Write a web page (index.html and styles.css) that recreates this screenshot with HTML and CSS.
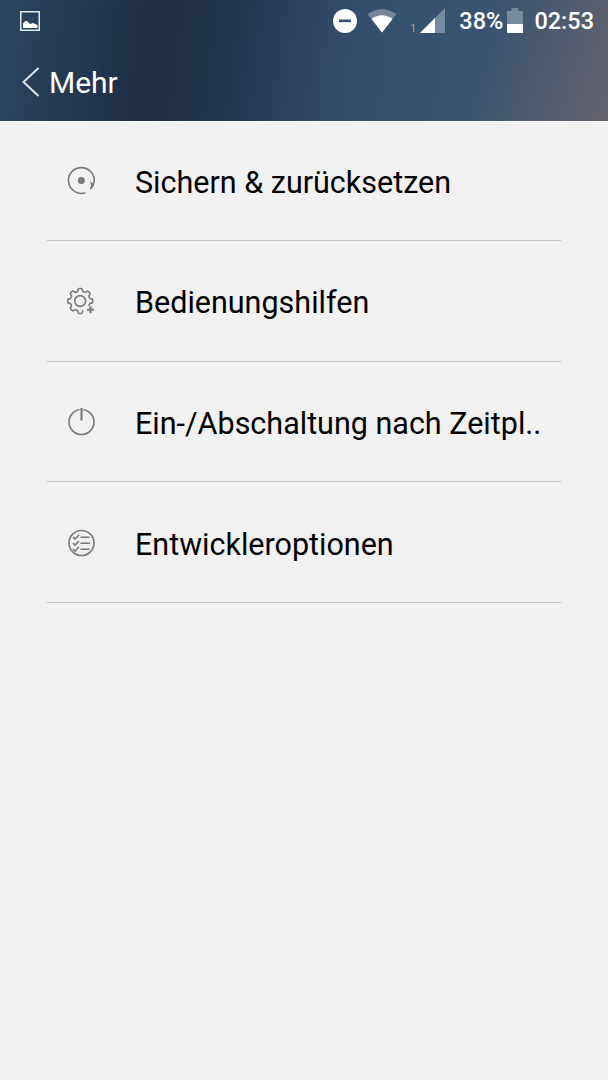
FILE: index.html
```html
<!DOCTYPE html>
<html lang="de">
<head>
  <meta charset="UTF-8">
  <meta name="viewport" content="width=device-width, initial-scale=1.0">
  <title>Mehr</title>
  <link rel="stylesheet" href="styles.css">
</head>
<body>
  <header class="header">
    <div class="status-bar">
      <svg class="picture" width="20" height="20" viewBox="0 0 20 20">
        <rect x=".75" y=".75" width="18.5" height="18.5" fill="none" stroke="#e4e8ec" stroke-width="1.5"/>
        <path d="M3 17v-4.500l2.500-2.500h1.500l3 3 3-1 4.500 2v3z" fill="#fff"/>
      </svg>
      <svg class="dnd" width="24" height="24" viewBox="0 0 24 24">
        <circle cx="12" cy="12" r="12" fill="#fff"/>
        <rect x="6" y="10.500" width="12" height="2.600" fill="#34506f"/>
      </svg>
      <svg class="wifi" width="30" height="24" viewBox="0 0 30 24">
        <path d="M.5 5Q15-4.500 29.500 5L15 23.500z" fill="#73869c"/>
        <path d="M4.500 10Q15 2.500 25.500 10L15 23.500z" fill="#fff"/>
      </svg>
      <span class="sim">1</span>
      <svg class="signal" width="25" height="25" viewBox="0 0 25 25">
        <path d="M25 0v25H0z" fill="#778a9f"/>
        <path d="M15 10v15H0z" fill="#fff"/>
      </svg>
      <span class="percent">38%</span>
      <svg class="battery" width="16" height="25" viewBox="0 0 16 25">
        <path d="M4.500 0h7v3H16v22H0V3h4.500z" fill="#778a9f"/>
        <path d="M0 16h16v9H0z" fill="#fff"/>
      </svg>
      <span class="clock">02:53</span>
    </div>
    <div class="title-bar">
      <svg class="back" width="18" height="30" viewBox="0 0 18 30">
        <path d="M16.500 1L1.500 15l15 14" fill="none" stroke="#dfe3e7" stroke-width="2"/>
      </svg>
      <h1>Mehr</h1>
    </div>
  </header>

  <ul class="list">
    <li class="item">
      <svg class="icon" viewBox="0 0 45 45">
        <path d="M25.500 33.700A12.900 12.900 0 1 1 34.200 22.500q-.4 4-3.800 7.600"/>
        <path d="M30 22q2.200 4.300-.4 9.300 3.400-3 4.200-6.300z" class="solid"/>
        <circle cx="21.300" cy="21.600" r="3.500" class="solid"/>
      </svg>
      <span class="label">Sichern &amp; zurücksetzen</span>
    </li>
    <li class="item">
      <svg class="icon" viewBox="0 0 45 45">
        <defs>
          <path id="tooth" d="M-2.700-9.600Q-2.200-10.200-2.100-11.400-1.900-12.500-1-12.500H1Q1.900-12.500 2.100-11.400 2.200-10.200 2.700-9.600 3.700-8.600 4.900-8.700"/>
        </defs>
        <g transform="translate(20.200 23)">
          <use href="#tooth"/>
          <use href="#tooth" transform="rotate(45)"/>
          <use href="#tooth" transform="rotate(90)"/>
          <use href="#tooth" transform="rotate(180)"/>
          <use href="#tooth" transform="rotate(225)"/>
          <use href="#tooth" transform="rotate(270)"/>
          <use href="#tooth" transform="rotate(315)"/>
          <circle r="5.400"/>
          <path d="M10.300 5.300v7M6.800 8.800h7" class="thick"/>
        </g>
      </svg>
      <span class="label">Bedienungshilfen</span>
    </li>
    <li class="item">
      <svg class="icon" viewBox="0 0 45 45">
        <circle cx="21.500" cy="23" r="12.500"/>
        <path d="M19.500 9.500h4v5h-4z" class="gap"/>
        <path d="M21.500 9v12.500" class="thick"/>
      </svg>
      <span class="label">Ein-/Abschaltung nach Zeitpl..</span>
    </li>
    <li class="item">
      <svg class="icon" viewBox="0 0 45 45">
        <circle cx="21.500" cy="23" r="12.500"/>
        <path d="M13 17l2 2 4-4M13 23l2 2 4-4M13 29l2 2 4-4M20.500 17.300h9M20.500 23.300h9.500M20.500 29.300h9"/>
      </svg>
      <span class="label">Entwickleroptionen</span>
    </li>
  </ul>
</body>
</html>
```

FILE: styles.css
```css
* {
  box-sizing: border-box;
}

body {
  margin: 0;
  min-height: 100vh;
  background-color: #f1f1f1;
  color: #000;
  font-family: Roboto, "Liberation Sans", sans-serif;
}

svg {
  display: block;
  flex: none;
}

.header {
  height: 122px;
  border-bottom: 1px solid #fff;
  background:
    linear-gradient(112deg, rgba(104, 100, 108, 0) 78%, rgba(104, 100, 108, .8) 100%),
    linear-gradient(97deg, #2b4864 0%, #243a54 11%, #1f2e46 25%, #22344e 38%, #2a4260 48%, #344f6e 58%, #385473 78%, #43556f 90%, #4c5970 100%);
  color: #fff;
}

.status-bar {
  display: flex;
  align-items: center;
  height: 42px;
  padding: 0 14px 0 20px;
  font-size: 23.5px;
  font-weight: 500;
}

.dnd {
  margin-top: -1px;
  margin-left: auto;
}

.wifi {
  margin-left: 10px;
}

.sim {
  margin: 15px 4px 0 13px;
  font-size: 11px;
  font-weight: 400;
  line-height: 12px;
  color: #9aa5b2;
}

.signal {
  margin-top: -2px;
  margin-right: 14px;
}

.battery {
  margin: -2px 11px 0 4px;
}

.title-bar {
  display: flex;
  align-items: center;
  height: 79px;
  padding-left: 22px;
}

.title-bar h1 {
  margin: 2px 0 0 9px;
  font-size: 30px;
  font-weight: 400;
}

.list {
  margin: 0 47px;
  padding: 0;
  list-style: none;
}

.item {
  display: flex;
  align-items: center;
  height: 120.67px;
  padding-left: 13px;
  border-bottom: 1px solid #bfc1c3;
}

.item:first-child {
  height: 119px;
}

.icon {
  width: 45px;
  height: 45px;
  margin-right: 28px;
  fill: none;
  stroke: #77797c;
  stroke-width: 1.6;
}

.icon .solid {
  fill: #77797c;
  stroke: none;
}

.icon .gap {
  fill: #f1f1f1;
  stroke: none;
}

.icon .thick {
  stroke-width: 2.1;
}

.label {
  padding: 4px 0 0 2px;
  font-size: 30.5px;
  white-space: nowrap;
}

.item:first-child .label {
  padding-top: 2px;
}
```
